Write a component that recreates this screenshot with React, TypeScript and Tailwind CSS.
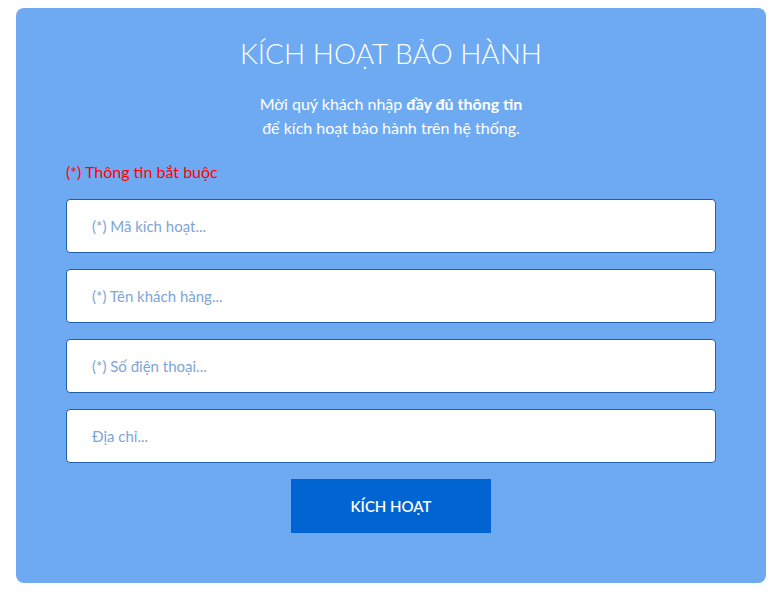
import React from "react";

const fields = [
  "(*) Mã kích hoạt...",
  "(*) Tên khách hàng...",
  "(*) Số điện thoại...",
  "Địa chỉ...",
];

const App = () => {
  return (
    <div className="w-[774px] h-[592px] bg-white pt-2 pl-4 font-['Lato','Noto_Sans',sans-serif]">
      <div className="w-[750px] h-[575px] rounded-lg bg-[#6eaaf2] px-[50px] pt-[25px]">
        <h1 className="text-center text-[28px] leading-[40px] font-light text-white">
          KÍCH HOẠT BẢO HÀNH
        </h1>
        <p className="mt-[19px] text-center text-[16px] leading-[24px] text-white">
          Mời quý khách nhập <span className="font-bold">đầy đủ thông tin</span>
          <br />
          để kích hoạt bảo hành trên hệ thống.
        </p>
        <p className="mt-[21px] text-[16px] leading-[22px] text-[#ff0000]">
          (*) Thông tin bắt buộc
        </p>
        <form className="mt-[16px] flex flex-col gap-4">
          {fields.map((f) => (
            <input
              key={f}
              type="text"
              placeholder={f}
              className="h-[54px] w-full rounded border border-[#1f5fae] bg-white px-[25px] text-[15px] text-[#333] placeholder:text-[#7da5d6] outline-none"
            />
          ))}
          <div className="flex justify-center">
            <button
              type="button"
              className="h-[54px] w-[200px] bg-[#0064d2] text-[15px] font-semibold text-white"
            >
              KÍCH HOẠT
            </button>
          </div>
        </form>
      </div>
    </div>
  );
};

export default App;
